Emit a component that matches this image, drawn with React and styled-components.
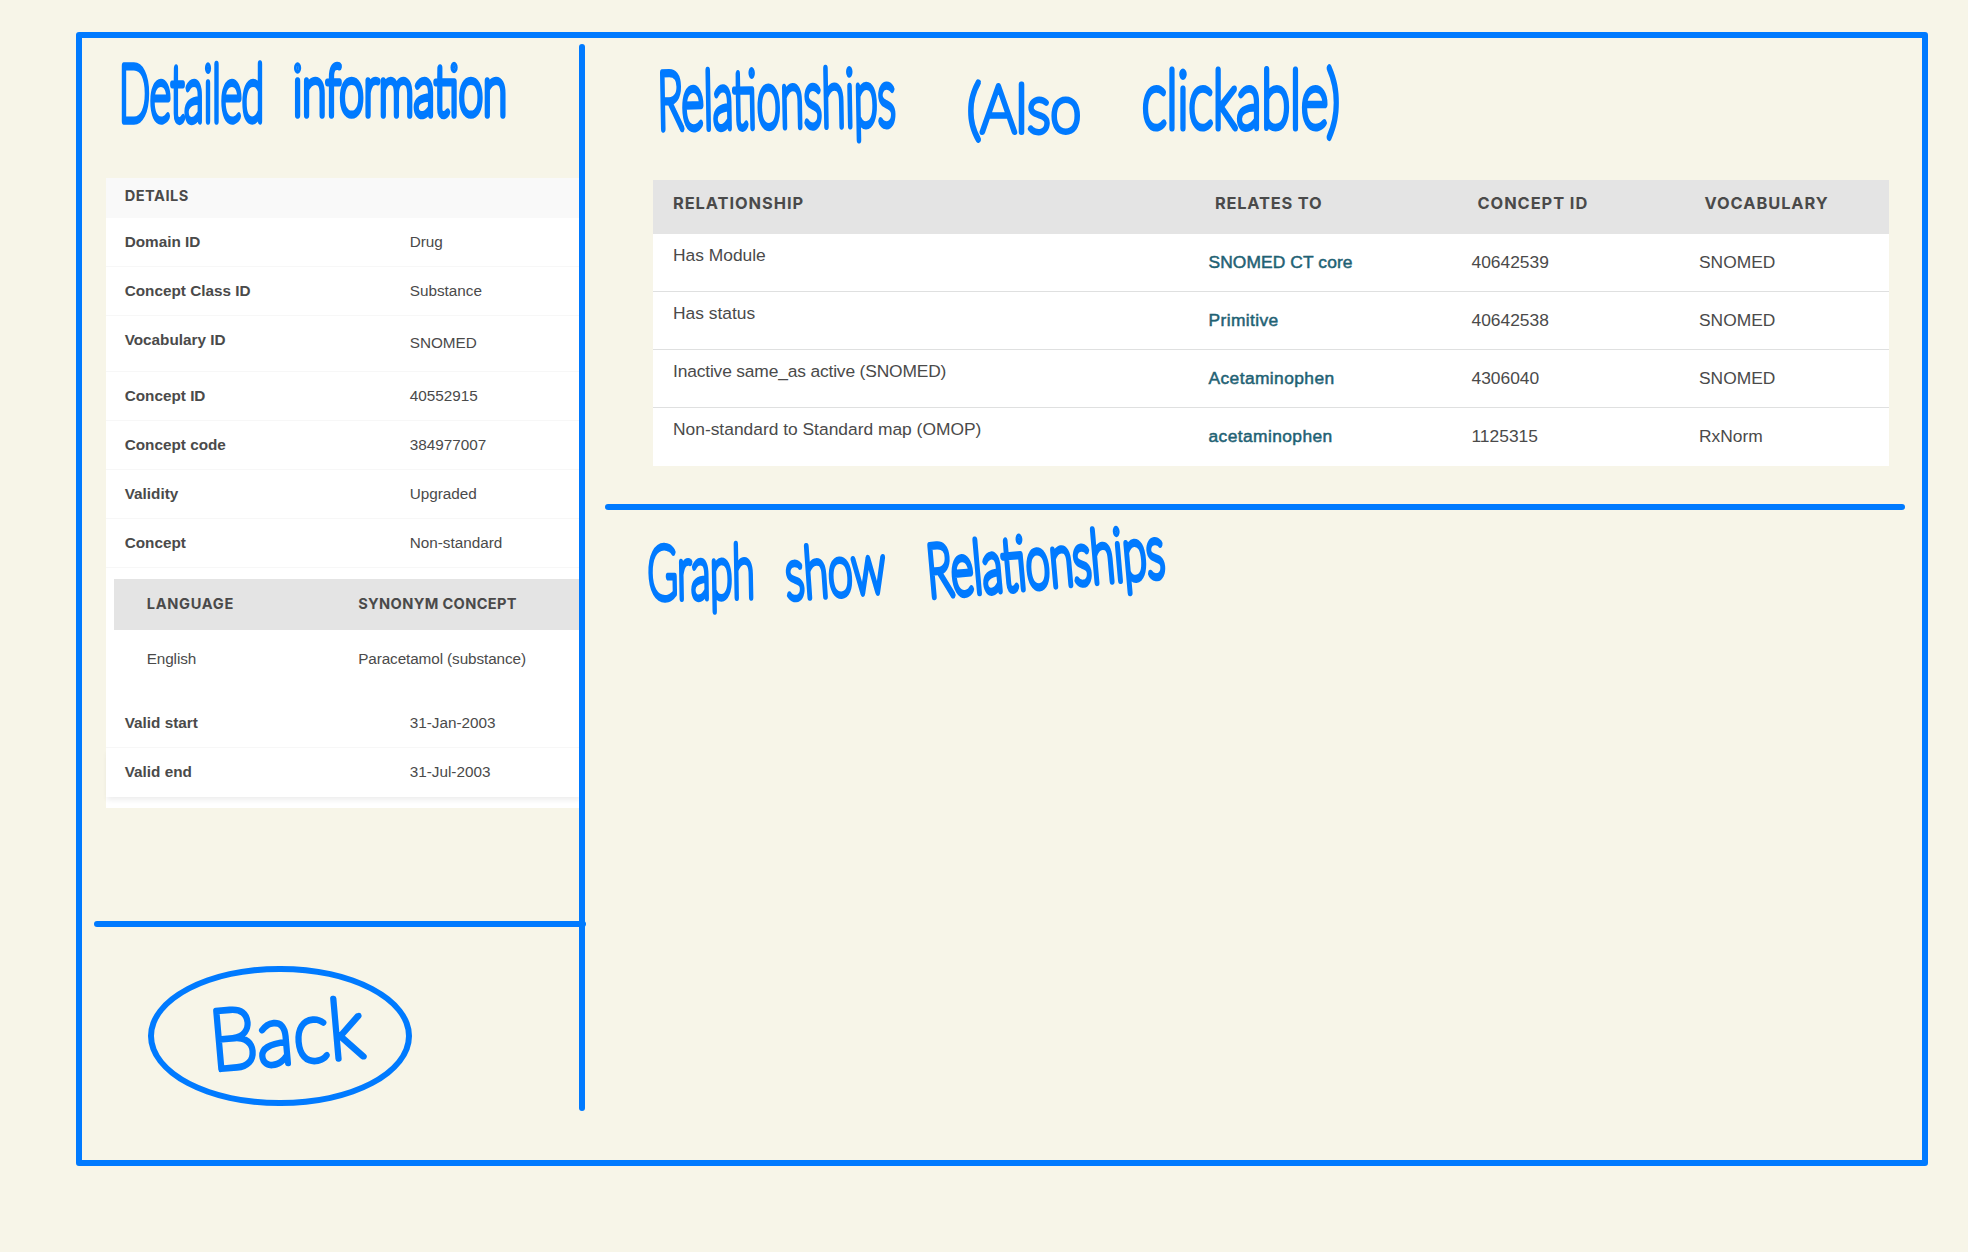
import React from "react";
import styled, { createGlobalStyle } from "styled-components";

const ink = "#007aff";

const GlobalStyle = createGlobalStyle`
  * { box-sizing: border-box; }
  html, body { margin: 0; background: #f7f5e8; }
  body { font-family: "Liberation Sans", Arial, sans-serif; color: #4a4a4a; }
`;

const Page = styled.div`
  width: 1968px;
  height: 1252px;
  padding: 32px 0 0 75.7px;
  overflow: hidden;
  background: #f7f5e8;
`;

const Frame = styled.main`
  display: flex;
  align-items: flex-start;
  width: 1852.3px;
  height: 1134px;
  border: 6px solid ${ink};
  border-radius: 3px;
`;

const Sidebar = styled.section`
  flex: none;
  width: 497.3px;
`;

const Content = styled.section`
  flex: 1;
  min-width: 0;
`;

const VerticalStroke = styled.div`
  flex: none;
  width: 6px;
  height: 1067px;
  margin-top: 5.5px;
  border-radius: 3px;
  background: ${ink};
`;

const HorizontalStroke = styled.div`
  width: ${(p) => p.$width}px;
  height: 6px;
  margin: ${(p) => p.$margin};
  border-radius: 3px;
  background: ${ink};
`;

const Sketch = styled.svg`
  display: block;
  overflow: visible;
  width: ${(p) => p.$width}px;
  height: ${(p) => p.$height}px;
`;

const Word = styled.text`
  font-family: Lato, "Open Sans", sans-serif;
  font-weight: 100;
  fill: ${ink};
  stroke: ${ink};
  stroke-width: ${(p) => p.$weight || 7.5}px;
  stroke-linejoin: round;
  stroke-linecap: round;
`;

function Handwriting({ width, height, words }) {
  return (
    <Sketch $width={width} $height={height} viewBox={`0 0 ${width} ${height}`}>
      {words.map((w) => (
        <Word
          key={w.text}
          $weight={w.weight}
          fontSize={w.size}
          textLength={w.length}
          lengthAdjust="spacingAndGlyphs"
          transform={`translate(${w.x} ${w.y}) rotate(${w.tilt || 0})`}
        >
          {w.text}
        </Word>
      ))}
    </Sketch>
  );
}

const DetailsCard = styled.div`
  width: 475px;
  height: 630px;
  margin-left: 24px;
  background: #fff;
  font-size: 15.3px;
`;

const CardTitle = styled.h2`
  margin: 0;
  height: 40px;
  padding: 0 0 4px 19px;
  display: flex;
  align-items: center;
  background: #f9f9f9;
  font: 700 14.6px Inter, sans-serif;
  letter-spacing: 0.5px;
`;

const DetailRow = styled.div`
  display: grid;
  grid-template-columns: 285px 1fr;
  align-items: start;
  height: ${(p) => p.$height || 49}px;
  padding: 15.3px 0 0 19px;
  line-height: 18px;
  border-bottom: ${(p) => (p.$last ? "0" : "1.5px solid #f7f7f7")};
  box-shadow: ${(p) => (p.$last ? "0 4px 5px -1px rgba(0,0,0,0.07)" : "none")};
`;

const DetailLabel = styled.span`
  font-weight: 700;
`;

const DetailValue = styled.span`
  padding-top: ${(p) => p.$drop || 0}px;
`;

const SynonymTable = styled.div`
  margin: 11px 0 0 8px;
  height: 120px;
`;

const SynonymRow = styled.div`
  display: grid;
  grid-template-columns: 211.5px 1fr;
  align-items: center;
  padding-left: 33px;
  padding-bottom: 1px;
  height: ${(p) => (p.$head ? 51 : 60)}px;
  background: ${(p) => (p.$head ? "#e4e4e4" : "transparent")};
`;

const SynonymText = styled.span`
  letter-spacing: -0.1px;
`;

const HeadLabel = styled.span`
  font: 700 ${(p) => p.$size || 16.4}px Inter, sans-serif;
  letter-spacing: ${(p) => (p.$tracking === undefined ? 0.95 : p.$tracking)}px;
  white-space: nowrap;
  padding-left: ${(p) => p.$indent || 0}px;
`;

const Relations = styled.div`
  width: 1236px;
  margin-left: 68px;
  background: #fff;
  font-size: 17.4px;
`;

const RelationRow = styled.div`
  display: grid;
  grid-template-columns: 535.5px 263px 227.5px 1fr;
  align-items: start;
  height: 58px;
  padding: 18px 0 0 20px;
  line-height: 20px;
  border-bottom: ${(p) => (p.$last ? "0" : "1px solid #dfe0e0")};
`;

const RelationHead = styled(RelationRow)`
  height: 54px;
  padding-top: 13px;
  border: 0;
  background: #e4e4e4;
`;

const RelationName = styled.span`
  margin-top: -7px;
  letter-spacing: ${(p) => p.$tracking || 0}px;
`;

const RelationLink = styled.a`
  color: #1f6274;
  -webkit-text-stroke: 0.5px #1f6274;
  letter-spacing: ${(p) => p.$tracking}px;
  cursor: pointer;
`;

const BackButton = styled.button`
  display: flex;
  align-items: center;
  justify-content: center;
  width: 263.5px;
  height: 140.5px;
  margin: 39px 0 0 66.5px;
  padding: 0;
  border: 6px solid ${ink};
  border-radius: 50%;
  background: transparent;
`;

const firstDetails = [
  ["Domain ID", "Drug"],
  ["Concept Class ID", "Substance"],
  ["Vocabulary ID", "SNOMED", 55.5, 3],
  ["Concept ID", "40552915"],
  ["Concept code", "384977007"],
  ["Validity", "Upgraded"],
  ["Concept", "Non-standard"],
];

const relations = [
  { name: "Has Module", target: "SNOMED CT core", id: "40642539", vocabulary: "SNOMED", linkTracking: 0.1 },
  { name: "Has status", target: "Primitive", id: "40642538", vocabulary: "SNOMED", linkTracking: 0.38 },
  { name: "Inactive same_as active (SNOMED)", target: "Acetaminophen", id: "4306040", vocabulary: "SNOMED", nameTracking: -0.16, linkTracking: 0.4 },
  { name: "Non-standard to Standard map (OMOP)", target: "acetaminophen", id: "1125315", vocabulary: "RxNorm", linkTracking: 0.4 },
];

export default function App() {
  return (
    <Page>
      <GlobalStyle />
      <Frame>
        <Sidebar>
          <Handwriting
            width={497}
            height={140}
            words={[
              { text: "Detailed", x: 37, y: 83, size: 79, length: 145 },
              { text: "information", x: 211, y: 77, size: 70, length: 214 },
            ]}
          />
          <DetailsCard>
            <CardTitle>DETAILS</CardTitle>
            {firstDetails.map(([label, value, height, drop]) => (
              <DetailRow key={label} $height={height}>
                <DetailLabel>{label}</DetailLabel>
                <DetailValue $drop={drop}>{value}</DetailValue>
              </DetailRow>
            ))}
            <SynonymTable>
              <SynonymRow $head>
                <HeadLabel $size={14.6} $tracking={0.7}>LANGUAGE</HeadLabel>
                <HeadLabel $size={14.6} $tracking={0.35}>SYNONYM CONCEPT</HeadLabel>
              </SynonymRow>
              <SynonymRow>
                <SynonymText>English</SynonymText>
                <SynonymText>Paracetamol (substance)</SynonymText>
              </SynonymRow>
            </SynonymTable>
            <DetailRow>
              <DetailLabel>Valid start</DetailLabel>
              <DetailValue>31-Jan-2003</DetailValue>
            </DetailRow>
            <DetailRow $last>
              <DetailLabel>Valid end</DetailLabel>
              <DetailValue>31-Jul-2003</DetailValue>
            </DetailRow>
          </DetailsCard>
          <HorizontalStroke $width={492.5} $margin="112.5px 0 0 12px" />
          <BackButton>
            <Handwriting
              width={150}
              height={76}
              words={[{ text: "Back", x: 7, y: 72, size: 84, length: 154, tilt: -5, weight: 5.8 }]}
            />
          </BackButton>
        </Sidebar>
        <VerticalStroke />
        <Content>
          <Handwriting
            width={1300}
            height={141.5}
            words={[
              { text: "Relationships", x: 73, y: 91, size: 80, length: 238, tilt: -1 },
              { text: "(Also", x: 382, y: 94, size: 66, length: 114, weight: 5.8 },
              { text: "clickable)", x: 557, y: 90, size: 80, length: 198, weight: 7 },
            ]}
          />
          <Relations>
            <RelationHead>
              <HeadLabel>RELATIONSHIP</HeadLabel>
              <HeadLabel $indent={6.5} $tracking={0.8}>RELATES TO</HeadLabel>
              <HeadLabel $indent={6}>CONCEPT ID</HeadLabel>
              <HeadLabel $indent={5.5}>VOCABULARY</HeadLabel>
            </RelationHead>
            {relations.map((r, i) => (
              <RelationRow key={r.name} $last={i === relations.length - 1}>
                <RelationName $tracking={r.nameTracking}>{r.name}</RelationName>
                <RelationLink $tracking={r.linkTracking}>{r.target}</RelationLink>
                <span>{r.id}</span>
                <span>{r.vocabulary}</span>
              </RelationRow>
            ))}
          </Relations>
          <HorizontalStroke $width={1300} $margin="38.5px 0 0 20px" />
          <Handwriting
            width={1300}
            height={130}
            words={[
              { text: "Graph", x: 63, y: 89, size: 74, length: 107, tilt: -1, weight: 7 },
              { text: "show", x: 202, y: 89, size: 71, length: 100, tilt: -4, weight: 6.8 },
              { text: "Relationships", x: 344, y: 87, size: 73, length: 238, tilt: -5 },
            ]}
          />
        </Content>
      </Frame>
    </Page>
  );
}
